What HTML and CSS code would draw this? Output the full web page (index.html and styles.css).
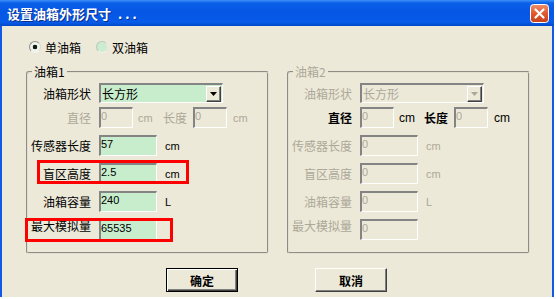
FILE: index.html
```html
<!DOCTYPE html>
<html lang="zh-CN">
<head>
  <meta charset="UTF-8" />
  <title>设置油箱外形尺寸</title>
  <link rel="stylesheet" href="styles.css">
</head>
<body>
  <div class="window">
    <!-- заголовок окна -->
    <div class="titlebar">
      <span class="title">设置油箱外形尺寸 <span class="dots">...</span></span>
      <span class="close">
        <svg width="19" height="19" viewBox="0 0 19 19">
          <defs>
            <linearGradient id="closeFill" x1="0" y1="0" x2="0" y2="1">
              <stop offset="0" stop-color="#f08f6c" />
              <stop offset="0.5" stop-color="#e1582e" />
              <stop offset="1" stop-color="#c8401a" />
            </linearGradient>
          </defs>
          <rect x="0.5" y="0.5" width="18" height="18" rx="3" fill="url(#closeFill)" stroke="#fff" />
          <path d="M5.5 5.5l8 8M13.5 5.5l-8 8" stroke="#fff" stroke-width="2.2" stroke-linecap="round" />
        </svg>
      </span>
    </div>

    <div class="client">
      <div class="mode">
        <label class="option"><span class="radio checked"></span>单油箱</label>
        <label class="option second"><span class="radio pale"></span>双油箱</label>
      </div>

      <div class="groups">
        <fieldset class="group">
          <legend>油箱1</legend>
          <div class="rows">
            <div class="row shape">
              <span class="label">油箱形状</span>
              <div class="combo">
                <span class="combo-text">长方形</span>
                <span class="combo-btn"><svg width="7" height="4" viewBox="0 0 7 4"><polygon points="0,0 7,0 3.5,4" /></svg></span>
              </div>
            </div>
            <div class="row">
              <span class="label muted">直径</span>
              <input class="field short" type="text" value="0" disabled>
              <span class="unit tight muted">cm</span>
              <span class="sub-label muted">长度</span>
              <input class="field short" type="text" value="0" disabled>
              <span class="unit near muted">cm</span>
            </div>
            <div class="row">
              <span class="label">传感器长度</span>
              <input class="field" type="text" value="57">
              <span class="unit">cm</span>
            </div>
            <div class="row marked">
              <span class="label">盲区高度</span>
              <input class="field" type="text" value="2.5">
              <span class="unit">cm</span>
              <span class="mark blind"></span>
            </div>
            <div class="row">
              <span class="label">油箱容量</span>
              <input class="field" type="text" value="240">
              <span class="unit">L</span>
            </div>
            <div class="row marked">
              <span class="label top">最大模拟量</span>
              <input class="field" type="text" value="65535">
              <span class="mark max"></span>
            </div>
          </div>
        </fieldset>

        <fieldset class="group disabled">
          <legend>油箱2</legend>
          <div class="rows">
            <div class="row shape">
              <span class="label">油箱形状</span>
              <div class="combo">
                <span class="combo-text">长方形</span>
                <span class="combo-btn"><svg width="7" height="4" viewBox="0 0 7 4"><polygon points="0,0 7,0 3.5,4" /></svg></span>
              </div>
            </div>
            <div class="row">
              <span class="label strong">直径</span>
              <input class="field short" type="text" value="0" disabled>
              <span class="unit tight dark">cm</span>
              <span class="sub-label strong">长度</span>
              <input class="field short" type="text" value="0" disabled>
              <span class="unit near dark">cm</span>
            </div>
            <div class="row">
              <span class="label">传感器长度</span>
              <input class="field" type="text" value="0" disabled>
              <span class="unit">cm</span>
            </div>
            <div class="row">
              <span class="label">盲区高度</span>
              <input class="field" type="text" value="0" disabled>
              <span class="unit">cm</span>
            </div>
            <div class="row">
              <span class="label">油箱容量</span>
              <input class="field" type="text" value="0" disabled>
              <span class="unit">L</span>
            </div>
            <div class="row">
              <span class="label top">最大模拟量</span>
              <input class="field" type="text" value="0" disabled>
            </div>
          </div>
        </fieldset>
      </div>

      <div class="actions">
        <button class="btn default">确定</button>
        <button class="btn">取消</button>
      </div>
    </div>
  </div>
</body>
</html>
```

FILE: styles.css
```css
* {
  box-sizing: border-box;
}
body {
  margin: 0;
  background: #fff;
  font: 12px "Noto Sans CJK SC", sans-serif;
  color: #000;
}

/* окно целиком */
.window {
  width: 554px;
  height: 297px;
  display: flex;
  flex-direction: column;
}
.titlebar {
  flex: none;
  height: 26px;
  display: flex;
  align-items: center;
  justify-content: space-between;
  padding: 0 5px 0 7px;
  background: linear-gradient(180deg, #3d8ff8 0%, #0a5fe8 12%, #0556e4 50%, #085cea 85%, #0048c8 100%);
  color: #fff;
}
.title {
  font-weight: bold;
  font-size: 13px;
  text-shadow: 1px 1px 0 #0b2d8a;
  white-space: nowrap;
}
.dots {
  margin-left: 4px;
  letter-spacing: 3px;
}
.close {
  display: flex;
}

.client {
  flex: 1;
  background: #ece9d8;
  border-left: 2px solid #1259e6;
  border-right: 2px solid #1259e6;
  padding-top: 14px;
}

/* переключатель один/два бака */
.mode {
  display: flex;
  align-items: center;
  height: 14px;
  padding-left: 27px;
}
.option {
  display: flex;
  align-items: center;
  gap: 4px;
}
.option.second {
  margin-left: 15px;
}
.radio {
  width: 12px;
  height: 12px;
  border-radius: 50%;
  border: 1px solid;
  border-color: #8f8f88 #dcdad0 #f4f3ee #8f8f88;
}
.radio.checked {
  background: radial-gradient(circle, #101810 0 2px, #eef5ec 2.6px);
}
.radio.pale {
  background: #cdeccf;
  border-color: #b9c9b9 #e2ece2 #eef4ee #b9c9b9;
}

/* группы */
.groups {
  display: flex;
  gap: 18px;
  margin-top: 11px;
  padding-left: 24px;
}
.group {
  width: 243px;
  margin: 0;
  padding: 4px 0 12px 0;
  border: 2px groove #e2dfd2;
  border-radius: 3px;
  min-inline-size: auto;
}
.group legend {
  margin-left: 4px;
  padding: 0 2px;
  line-height: 14px;
}
.rows {
  display: flex;
  flex-direction: column;
  gap: 7px;
}
.row {
  display: flex;
  align-items: center;
  height: 21px;
}
.row.shape {
  height: 20px;
  margin-bottom: -3px;
}
.row.marked {
  position: relative;
}
.label {
  flex: none;
  width: 63px;
  margin-right: 8px;
  text-align: right;
  white-space: nowrap;
}
.label.top {
  align-self: flex-start;
  line-height: 14px;
}
.sub-label {
  flex: none;
  width: 24px;
  margin-right: 6px;
  white-space: nowrap;
}
.unit {
  margin-left: 8px;
  font: 11px "Liberation Sans", sans-serif;
}
.unit.tight {
  margin-left: 5px;
  width: 25px;
}
.unit.near {
  margin-left: 6px;
}
.muted {
  color: #aca899;
}

/* поля ввода */
.field {
  flex: none;
  width: 58px;
  height: 21px;
  margin: 0;
  padding: 0 0 4px 0;
  border-style: solid;
  border-width: 2px 1px 1px 2px;
  border-color: #848484 #fff #fff #848484;
  background: #c7edcc;
  font: 11px "Liberation Sans", sans-serif;
  color: #000;
  outline: none;
}
.field.short {
  width: 34px;
}
.field:disabled {
  background: #ece9d8;
  color: #aca899;
}

.combo {
  width: 124px;
  height: 20px;
  display: flex;
  align-items: center;
  border-style: solid;
  border-width: 2px 1px 1px 2px;
  border-color: #848484 #fff #fff #848484;
  background: #c7edcc;
}
.combo-text {
  flex: 1;
  padding-left: 1px;
}
.combo-btn {
  width: 15px;
  height: 16px;
  margin-right: 1px;
  display: flex;
  align-items: center;
  justify-content: center;
  background: #ece9d8;
  border: 1px solid;
  border-color: #fff #404040 #404040 #fff;
  box-shadow: inset -1px -1px 0 #808080;
}
.combo-btn polygon {
  fill: #000;
}

/* второй бак — неактивен */
.group.disabled legend,
.group.disabled .label,
.group.disabled .unit,
.group.disabled .combo-text {
  color: #aca899;
}
.group.disabled .combo {
  background: #ece9d8;
}
.group.disabled .combo-btn polygon {
  fill: #aca899;
}
.group.disabled .strong {
  color: #000;
  font-weight: bold;
}
.group.disabled .unit.dark {
  color: #000;
  font-size: 12px;
}

/* красные рамки-пометки поверх строк */
.mark {
  position: absolute;
  border: 3px solid #f00;
  height: 24px;
  pointer-events: none;
}
.mark.blind {
  left: 9px;
  top: -3px;
  width: 152px;
}
.mark.max {
  left: -3px;
  top: -1px;
  width: 148px;
}

/* кнопки */
.actions {
  display: flex;
  gap: 77px;
  margin-top: 14px;
  padding-left: 164px;
}
.btn {
  width: 72px;
  height: 24px;
  padding: 0;
  font: bold 12px "Noto Sans CJK SC", sans-serif;
  color: #000;
  background: #ece9d8;
  border: 1px solid;
  border-color: #fff #404040 #404040 #fff;
  box-shadow: inset -1px -1px 0 #808080;
}
.btn.default {
  border-color: #000;
  box-shadow: inset 1px 1px 0 #fff, inset -1px -1px 0 #404040, inset -2px -2px 0 #808080;
}
```
